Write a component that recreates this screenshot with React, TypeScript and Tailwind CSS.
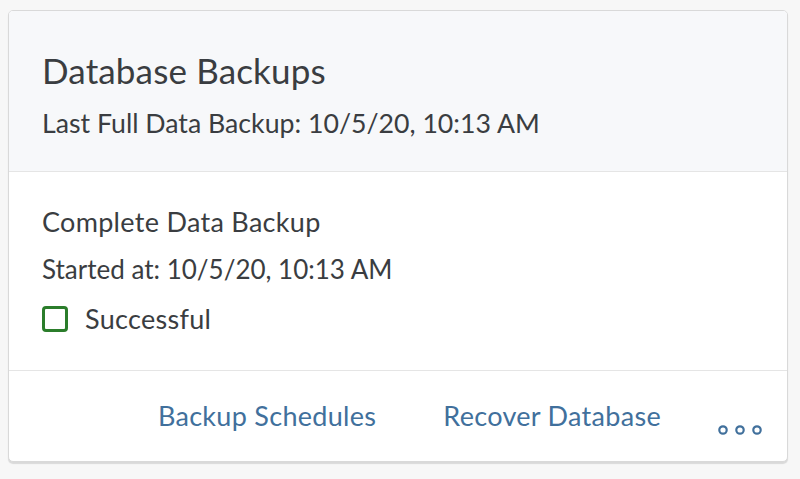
const font = { fontFamily: "Lato, 'Noto Sans', sans-serif" };

const OverflowDots = () => (
  <svg width="46" height="10" viewBox="0 0 46 10" className="block">
    {[5, 22, 39].map((cx) => (
      <circle key={cx} cx={cx} cy="5" r="3.7" fill="none" stroke="#41709c" strokeWidth="2.2" />
    ))}
  </svg>
);

const BackupCard = () => {
  return (
    <div className="w-[780px] h-[452px] rounded-[5px] border border-[#d9d9d9] bg-white shadow-[0_2px_1px_rgba(0,0,0,0.12)] overflow-hidden flex flex-col text-[#3a3d41]">
      {/* HEADER */}
      <div className="bg-[#f7f8fa] border-b border-[#e5e5e5] pl-[33px] pt-[39px] h-[161px]">
        <h1 className="text-[35px] leading-[40px] tracking-[0.15px]">Database Backups</h1>
        <p className="mt-[17px] text-[26.7px] leading-[32px]">Last Full Data Backup: 10/5/20, 10:13 AM</p>
      </div>

      {/* CONTENT */}
      <div className="border-b border-[#e5e5e5] pl-[33px] pt-[34px] h-[199px] text-[27px] leading-[32px]">
        <p className="tracking-[0.3px]">Complete Data Backup</p>
        <p className="mt-[15px] text-[26px]">Started at: 10/5/20, 10:13 AM</p>
        <div className="mt-[18px] flex items-center">
          <span className="w-[26px] h-[26px] rounded-[4px] border-[3px] border-[#2b7d2b]" />
          <span className="ml-[17px] tracking-[0.3px]">Successful</span>
        </div>
      </div>

      {/* FOOTER */}
      <div className="flex-1 flex items-end justify-end pr-[23px] pb-[29px] text-[27px] leading-[32px] tracking-[0.3px] text-[#41709c]">
        <a className="cursor-pointer">Backup Schedules</a>
        <a className="ml-[67px] cursor-pointer">Recover Database</a>
        <button className="ml-[57px] mb-[-3px]">
          <OverflowDots />
        </button>
      </div>
    </div>
  );
};

export default function App() {
  return (
    <div className="w-[800px] h-[479px] bg-[#f7f7f7] pt-[10px] pl-[8px]" style={font}>
      <BackupCard />
    </div>
  );
}
